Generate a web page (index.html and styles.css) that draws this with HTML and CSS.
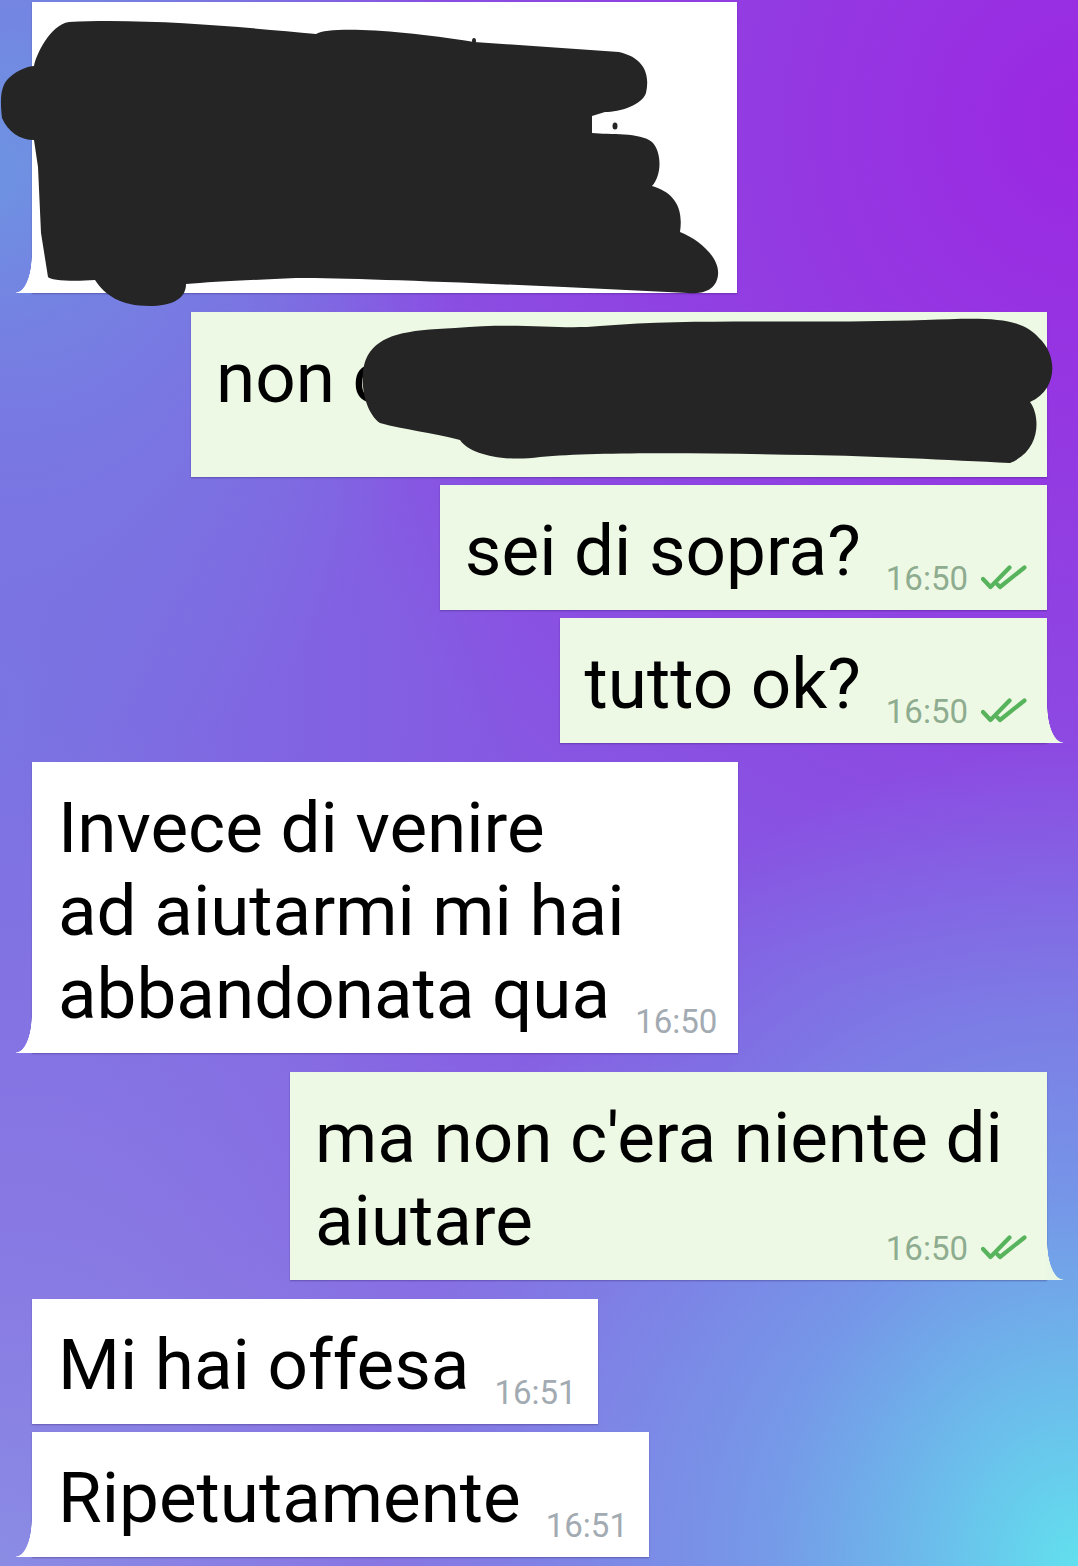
FILE: index.html
```html
<!DOCTYPE html>
<html lang="it">
<head>
<meta charset="utf-8">
<title>Chat</title>
<link rel="stylesheet" href="styles.css">
</head>
<body>
<div class="chat">

  <div class="msg in">
    <div class="bubble tail redacted-top">
      <svg class="redact" viewBox="32 2 705 291" aria-hidden="true">
        <path d="M69,22 C150,18 250,28 316,34 C330,26 400,30 474,42 L619,52 C645,58 650,75 646,93 C642,105 620,112 605,112 L592,116 L592,133 C610,135 640,132 652,142 C662,152 662,175 652,186 C672,192 684,205 680,232 C700,240 720,258 718,275 C716,292 700,294 688,293 L564,287 C450,282 350,278 296,278 C250,280 210,282 186,284 C186,300 170,306 150,306 C120,306 105,295 95,280 C70,282 50,280 48,277 L41,233 L38,167 L34,140 C20,140 8,132 2,118 C0,100 0,85 10,77 C18,70 28,66 34,66 C36,55 50,25 69,22 Z"/>
        <ellipse cx="615" cy="126" rx="2.5" ry="3.5"/>
        <ellipse cx="474" cy="41" rx="2" ry="3"/>
      </svg>
    </div>
  </div>

  <div class="msg out">
    <div class="bubble redacted-wide">non c<span class="meta below"><span class="time">16:50</span><svg class="checks" viewBox="0 0 46 25"><path d="M2 14 L9.5 22 L28.5 2.5"/><path d="M16.5 19.5 L19 22 L43.5 2.5"/></svg></span>
      <svg class="redact" viewBox="191 312 856 165" aria-hidden="true">
        <path d="M380,423 C362,410 358,372 368,355 C380,335 405,330 455,328 C520,322 560,330 600,326 C700,318 800,324 925,320 C980,318 1020,315 1039,338 C1058,355 1058,390 1030,402 C1040,415 1042,450 1010,463 C950,460 870,456 810,455 C700,453 600,452 540,457 C505,462 470,455 460,440 C430,432 405,430 380,423 Z"/>
      </svg>
    </div>
  </div>

  <div class="msg out">
    <div class="bubble">sei di sopra?<span class="meta"><span class="time">16:50</span><svg class="checks" viewBox="0 0 46 25"><path d="M2 14 L9.5 22 L28.5 2.5"/><path d="M16.5 19.5 L19 22 L43.5 2.5"/></svg></span></div>
  </div>

  <div class="msg out">
    <div class="bubble tail">tutto ok?<span class="meta"><span class="time">16:50</span><svg class="checks" viewBox="0 0 46 25"><path d="M2 14 L9.5 22 L28.5 2.5"/><path d="M16.5 19.5 L19 22 L43.5 2.5"/></svg></span></div>
  </div>

  <div class="msg in">
    <div class="bubble tail">Invece di venire<br>ad aiutarmi mi hai<br>abbandonata qua<span class="meta"><span class="time">16:50</span></span></div>
  </div>

  <div class="msg out">
    <div class="bubble tail wrapped">ma non c'era niente di<br>aiutare<span class="meta"><span class="time">16:50</span><svg class="checks" viewBox="0 0 46 25"><path d="M2 14 L9.5 22 L28.5 2.5"/><path d="M16.5 19.5 L19 22 L43.5 2.5"/></svg></span></div>
  </div>

  <div class="msg in">
    <div class="bubble">Mi hai offesa<span class="meta"><span class="time">16:51</span></span></div>
  </div>

  <div class="msg in">
    <div class="bubble tail">Ripetutamente<span class="meta"><span class="time">16:51</span></span></div>
  </div>

</div>
</body>
</html>
```

FILE: styles.css
```css
* {
  box-sizing: border-box;
}

html,
body {
  margin: 0;
}

body {
  width: 1078px;
  height: 1566px;
  overflow: hidden;
  font-family: Roboto, "Noto Sans", "Liberation Sans", sans-serif;
  background:
    radial-gradient(ellipse 700px 820px at 100% 100%, #62e0ee 0%, rgba(104, 200, 236, 0.55) 45%, rgba(110, 160, 232, 0) 100%),
    radial-gradient(ellipse 900px 850px at 0% 100%, #8a8ce4 0%, rgba(136, 138, 228, 0) 100%),
    radial-gradient(ellipse 520px 620px at 0% 45%, #7a74e2 0%, rgba(122, 116, 226, 0) 100%),
    radial-gradient(ellipse 460px 620px at 0% 12%, #6c98e2 0%, rgba(108, 152, 226, 0) 100%),
    radial-gradient(ellipse 820px 900px at 100% 8%, #9b28e2 0%, rgba(155, 40, 226, 0) 100%),
    #8658e2;
}

.chat {
  display: flex;
  flex-direction: column;
  padding: 2px 31px 0 32px;
}

.msg {
  display: flex;
}

.msg.in {
  justify-content: flex-start;
}

.msg.out {
  justify-content: flex-end;
}

.msg + .msg {
  margin-top: 8px;
}

.msg.in + .msg.out,
.msg.out + .msg.in {
  margin-top: 19px;
}

.bubble {
  position: relative;
  display: flow-root;
  padding: 24px 20px 13px 25px;
  font-size: 71px;
  line-height: 83px;
  color: #000;
  white-space: nowrap;
  box-shadow: 0 1px 1.5px rgba(40, 20, 90, 0.35);
}

.msg.in .bubble {
  background: #ffffff;
  padding-left: 26px;
  padding-right: 21px;
}

.msg.out .bubble {
  background: #eef9e5;
}

.bubble.wrapped {
  width: 757px;
  background: #e9f8e5;
}

.meta {
  float: right;
  margin: 52px 0 0 25px;
  font-size: 33px;
  line-height: 36px;
  white-space: nowrap;
}

.meta.below {
  float: none;
  display: block;
  text-align: right;
  margin: 9px 0 0 0;
}

.msg.in .meta {
  color: #a2aab2;
}

.msg.out .meta {
  color: #8eac8f;
}

.checks {
  width: 46px;
  height: 25px;
  margin-left: 13px;
  vertical-align: baseline;
  fill: none;
  stroke: #58b35d;
  stroke-width: 4.2;
  stroke-linecap: round;
  stroke-linejoin: round;
}

.tail::before {
  content: "";
  position: absolute;
  bottom: 0;
  width: 16px;
  height: 38px;
}

.msg.in .tail::before {
  left: -16px;
  background: radial-gradient(16px 38px at 0 0, rgba(255, 255, 255, 0) 97%, #ffffff 100%);
}

.msg.out .tail::before {
  right: -16px;
  background: radial-gradient(16px 38px at 100% 0, rgba(238, 249, 229, 0) 97%, #eef9e5 100%);
}

.msg.out .tail.wrapped::before {
  background: radial-gradient(16px 38px at 100% 0, rgba(233, 248, 229, 0) 97%, #e9f8e5 100%);
}

.redacted-top {
  width: 705px;
  height: 291px;
}

.redacted-wide {
  width: 856px;
}

.redact {
  position: absolute;
  left: 0;
  top: 0;
  width: 100%;
  height: 100%;
  overflow: visible;
  fill: #252525;
}
```
